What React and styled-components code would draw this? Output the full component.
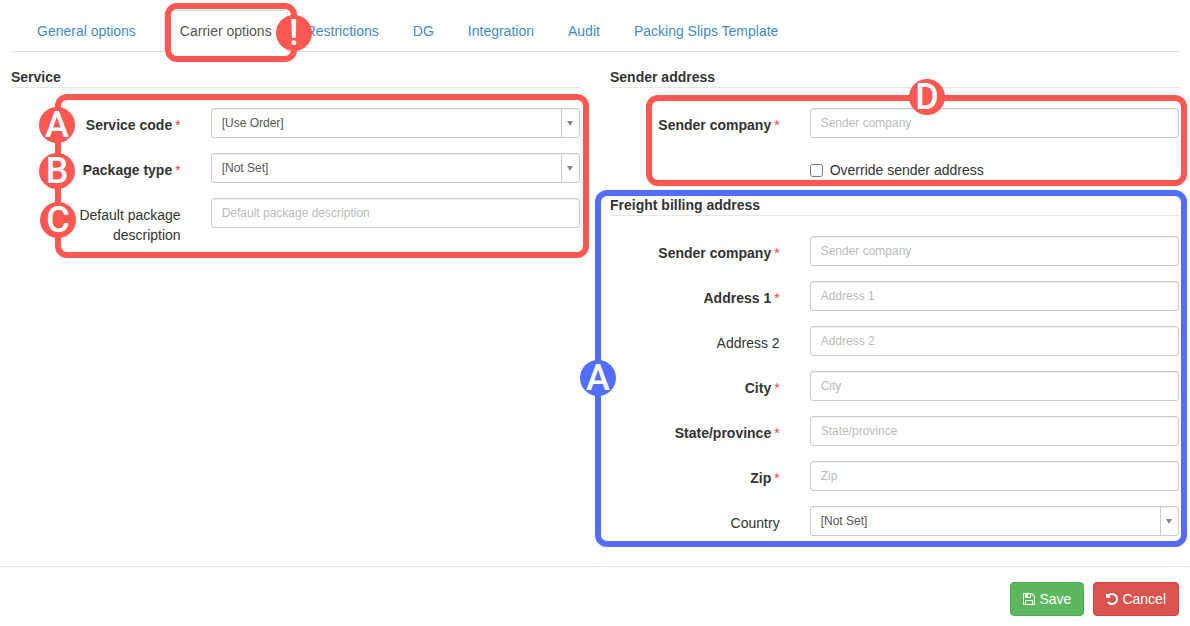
import styled, { createGlobalStyle } from "styled-components";

const GlobalStyle = createGlobalStyle`
  *, *::before, *::after {
    box-sizing: border-box;
  }

  body {
    margin: 0;
    background: #fff;
    color: #333;
    font-family: "Liberation Sans", Arial, sans-serif;
    font-size: 14px;
    line-height: 20px;
  }
`;

const RED = "#ff5751";
const BLUE = "#536dfe";

const Page = styled.form`
  padding-top: 10px;
`;

const Tabs = styled.ul`
  display: flex;
  gap: 2px;
  margin: 0 11px 15px;
  padding: 0;
  list-style: none;
  border-bottom: 1px solid #ddd;
`;

const TabItem = styled.li`
  position: relative;
  margin-bottom: -1px;
`;

const TabLink = styled.a`
  display: block;
  padding: 10px ${({ $wide }) => ($wide ? 25 : 15)}px;
  border: 1px solid ${({ $active }) => ($active ? "#ddd" : "transparent")};
  border-bottom-color: ${({ $active }) => ($active ? "#fff" : "transparent")};
  border-radius: 4px 4px 0 0;
  background: ${({ $active }) => ($active ? "#fff" : "transparent")};
  color: ${({ $active }) => ($active ? "#555" : "#428bca")};
  text-decoration: none;
  white-space: nowrap;
`;

const Columns = styled.div`
  display: grid;
  grid-template-columns: 1fr 1fr;
  gap: 30px;
  padding: 0 11px;
`;

const Section = styled.section`
  position: relative;
  margin-bottom: 15px;
`;

const Heading = styled.h2`
  margin: 0 0 20px;
  border-bottom: 1px solid #e5e5e5;
  font-size: 14px;
  line-height: 20px;
`;

const Fields = styled.div`
  position: relative;
  display: flex;
  flex-direction: column;
  gap: 15px;
`;

const Row = styled.div`
  display: flex;
  margin: 0 -15px;
`;

const LabelCell = styled.div`
  width: 33.33%;
  padding: 7px 15px 0;
  text-align: right;
`;

const Label = styled.label`
  font-weight: ${({ $required }) => ($required ? "bold" : "normal")};
`;

const Star = styled.span`
  margin-left: 3px;
  color: #f44336;
  font-weight: normal;
`;

const ControlCell = styled.div`
  width: 66.67%;
  padding: 0 15px;
`;

const TextInput = styled.input`
  display: block;
  width: 100%;
  height: 30px;
  padding: 0 10px;
  border: 1px solid #ccc;
  border-radius: 3px;
  background: #fff;
  box-shadow: inset 0 1px 1px rgba(0, 0, 0, 0.075);
  color: #555;
  font-family: inherit;
  font-size: 12px;

  &::placeholder {
    color: #bbb;
  }
`;

const SelectWrap = styled.div`
  display: flex;
  height: 30px;
  border: 1px solid #ccc;
  border-radius: 3px;
  background: #fff;
  box-shadow: inset 0 1px 1px rgba(0, 0, 0, 0.075);
`;

const SelectBox = styled.select`
  flex: 1;
  min-width: 0;
  margin-right: -18px;
  padding: 0 28px 0 10px;
  appearance: none;
  border: 0;
  background: transparent;
  color: #555;
  font-family: inherit;
  font-size: 12px;
`;

const SelectArrow = styled.span`
  display: flex;
  align-items: center;
  justify-content: center;
  width: 18px;
  border-left: 1px solid #ccc;
  pointer-events: none;

  &::before {
    content: "";
    border: 3px solid transparent;
    border-top: 5px solid #888;
    border-bottom: 0;
  }
`;

const CheckLabel = styled.label`
  display: flex;
  align-items: center;
  gap: 7px;
  padding-top: 7px;
`;

const Checkbox = styled.input`
  width: 13px;
  height: 13px;
  margin: 0;
`;

const Footer = styled.footer`
  display: flex;
  justify-content: flex-end;
  gap: 9px;
  margin-top: 15px;
  padding: 15px 11px 10px;
  border-top: 1px solid #e5e5e5;
`;

const Button = styled.button`
  display: flex;
  align-items: center;
  gap: 4px;
  height: 34px;
  padding: 0 12px;
  border: 1px solid ${({ $border }) => $border};
  border-radius: 4px;
  background: ${({ $color }) => $color};
  color: #fff;
  font-family: inherit;
  font-size: 14px;
`;

const Outline = styled.div`
  position: absolute;
  top: ${({ $top }) => $top}px;
  right: ${({ $right }) => $right}px;
  bottom: ${({ $bottom }) => $bottom}px;
  left: ${({ $left }) => $left}px;
  z-index: 1;
  border: 6px solid ${({ $color }) => $color};
  border-radius: 12px;
  pointer-events: none;
`;

const Badge = styled.span`
  position: absolute;
  top: ${({ $top }) => $top};
  left: ${({ $left }) => $left};
  display: flex;
  align-items: center;
  justify-content: center;
  width: 36px;
  height: 36px;
  margin: -18px 0 0 -18px;
  border-radius: 50%;
  background: ${({ $color }) => $color};
  color: #fff;
  font-family: Roboto, sans-serif;
  font-size: 36px;
  font-weight: 500;
  line-height: 36px;
`;

const tabs = [
  "General options",
  "Carrier options",
  "Restrictions",
  "DG",
  "Integration",
  "Audit",
  "Packing Slips Template",
];

const billingFields = [
  { id: "billing-company", label: "Sender company", required: true },
  { id: "billing-address1", label: "Address 1", required: true },
  { id: "billing-address2", label: "Address 2" },
  { id: "billing-city", label: "City", required: true },
  { id: "billing-state", label: "State/province", required: true },
  { id: "billing-zip", label: "Zip", required: true },
  { id: "billing-country", label: "Country", options: ["[Not Set]"] },
];

function Field({ id, label, required, options }) {
  return (
    <Row>
      <LabelCell>
        <Label htmlFor={id} $required={required}>
          {label}
          {required && <Star>*</Star>}
        </Label>
      </LabelCell>
      <ControlCell>
        {options ? (
          <SelectWrap>
            <SelectBox id={id}>
              {options.map((option) => (
                <option key={option}>{option}</option>
              ))}
            </SelectBox>
            <SelectArrow />
          </SelectWrap>
        ) : (
          <TextInput id={id} type="text" placeholder={label} />
        )}
      </ControlCell>
    </Row>
  );
}

function SaveIcon() {
  return (
    <svg width="12" height="14" viewBox="128 0 1536 1792" fill="currentColor">
      <path d="M512 1536h768v-384h-768v384zm896 0h128v-896q0-14-10-38.5t-20-34.5l-281-281q-10-10-34-20t-39-10v416q0 40-28 68t-68 28h-576q-40 0-68-28t-28-68v-416h-128v1280h128v-416q0-40 28-68t68-28h832q40 0 68 28t28 68v416zm-384-928v-320q0-13-9.500-22.500t-22.500-9.500h-192q-13 0-22.500 9.500t-9.500 22.500v320q0 13 9.500 22.500t22.500 9.500h192q13 0 22.500-9.500t9.500-22.500zm640 32v928q0 40-28 68t-68 28h-1344q-40 0-68-28t-28-68v-1344q0-40 28-68t68-28h928q40 0 88 20t76 48l280 280q28 28 48 76t20 88z" />
    </svg>
  );
}

function UndoIcon() {
  return (
    <svg width="12" height="14" viewBox="128 0 1536 1792" fill="currentColor">
      <path d="M1664 896q0 156-61 298t-164 245-245 164-298 61q-172 0-327-72.500t-264-204.500q-7-10-6.500-22.500t8.500-20.500l137-138q10-9 25-9 16 2 23 12 73 95 179 147t225 52q104 0 198.500-40.500t163.500-109.500 109.500-163.500 40.500-198.500-40.500-198.500-109.500-163.500-163.500-109.500-198.500-40.500q-98 0-188 35.500t-160 101.500l137 138q31 30 14 69-17 40-59 40h-448q-26 0-45-19t-19-45v-448q0-42 40-59 39-17 69 14l130 129q107-101 244.500-156.500t284.500-55.500q156 0 298 61t245 164 164 245 61 298z" />
    </svg>
  );
}

export default function App() {
  return (
    <>
      <GlobalStyle />
      <Page onSubmit={(event) => event.preventDefault()}>
        <Tabs>
          {tabs.map((tab, index) => (
            <TabItem key={tab}>
              <TabLink href="#" $wide={index === 0} $active={index === 1}>
                {tab}
              </TabLink>
              {index === 1 && (
                <Outline $color={RED} $top={-7} $right={-9} $bottom={-10} $left={1}>
                  <Badge $color={RED} $top="50%" $left="calc(100% + 3px)">!</Badge>
                </Outline>
              )}
            </TabItem>
          ))}
        </Tabs>

        <Columns>
          <div>
            <Section>
              <Heading>Service</Heading>
              <Fields>
                <Field id="service-code" label="Service code" required options={["[Use Order]"]} />
                <Field id="package-type" label="Package type" required options={["[Not Set]"]} />
                <Field id="package-description" label="Default package description" />
                <Outline $color={RED} $top={-14} $right={-9} $bottom={-13} $left={44}>
                  <Badge $color={RED} $top="25px" $left="-4px">A</Badge>
                  <Badge $color={RED} $top="71px" $left="-4px">B</Badge>
                  <Badge $color={RED} $top="120px" $left="-3px">C</Badge>
                </Outline>
              </Fields>
            </Section>
          </div>

          <div>
            <Section>
              <Heading>Sender address</Heading>
              <Fields>
                <Field id="sender-company" label="Sender company" required />
                <Row>
                  <LabelCell />
                  <ControlCell>
                    <CheckLabel>
                      <Checkbox type="checkbox" />
                      Override sender address
                    </CheckLabel>
                  </ControlCell>
                </Row>
                <Outline $color={RED} $top={-13} $right={-8} $bottom={-6} $left={36}>
                  <Badge $color={RED} $top="-4px" $left="52%">D</Badge>
                </Outline>
              </Fields>
            </Section>

            <Section>
              <Heading>Freight billing address</Heading>
              <Fields>
                {billingFields.map((field) => (
                  <Field key={field.id} {...field} />
                ))}
              </Fields>
              <Outline $color={BLUE} $top={-5} $right={-8} $bottom={-11} $left={-15}>
                <Badge $color={BLUE} $top="182px" $left="-3px">A</Badge>
              </Outline>
            </Section>
          </div>
        </Columns>

        <Footer>
          <Button type="submit" $color="#5cb85c" $border="#4cae4c">
            <SaveIcon />
            Save
          </Button>
          <Button type="button" $color="#d9534f" $border="#d43f3a">
            <UndoIcon />
            Cancel
          </Button>
        </Footer>
      </Page>
    </>
  );
}
